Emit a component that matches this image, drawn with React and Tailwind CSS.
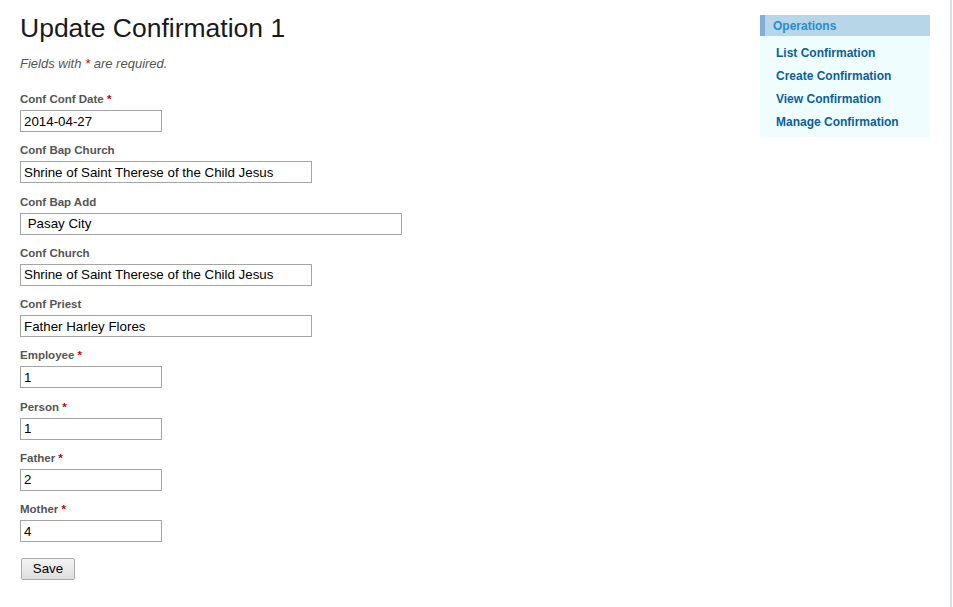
import React from "react";

const fields = [
  { label: "Conf Conf Date", value: "2014-04-27", required: true, w: "w-[142px]" },
  { label: "Conf Bap Church", value: "Shrine of Saint Therese of the Child Jesus", w: "w-[292px]" },
  { label: "Conf Bap Add", value: " Pasay City", w: "w-[382px]" },
  { label: "Conf Church", value: "Shrine of Saint Therese of the Child Jesus", w: "w-[292px]" },
  { label: "Conf Priest", value: "Father Harley Flores", w: "w-[292px]" },
  { label: "Employee", value: "1", required: true, w: "w-[142px]" },
  { label: "Person", value: "1", required: true, w: "w-[142px]" },
  { label: "Father", value: "2", required: true, w: "w-[142px]" },
  { label: "Mother", value: "4", required: true, w: "w-[142px]" },
];

const operations = ["List Confirmation", "Create Confirmation", "View Confirmation", "Manage Confirmation"];

function Field({ label, value, required, w }) {
  return (
    <div className="mb-[11.25px]">
      <label className="block text-[11.5px] leading-[15px] font-bold text-[#555]">
        {label}
        {required && <span className="text-[#cc0000]"> *</span>}
      </label>
      <input
        type="text"
        defaultValue={value}
        className={`${w} block mt-[3px] h-[22px] border border-[#a5a5a5] bg-white px-[3px] text-[13.33px] text-black outline-none`}
      />
    </div>
  );
}

export default function App() {
  return (
    <div className="w-[953px] min-h-screen bg-white" style={{ fontFamily: '"Liberation Sans", Arial, sans-serif' }}>
      <div className="flex w-[952px] min-h-screen border-r-2 border-[#d8e0e8]">
        <div className="flex-1 pl-[20px] pt-[12px]">
          <h1 className="text-[26.5px] leading-[32px] text-[#1a1a1a]">Update Confirmation 1</h1>
          <p className="mt-[11.5px] mb-[20.5px] text-[13px] leading-[16px] italic text-[#555]">
            Fields with <span className="text-[#cc0000]">*</span> are required.
          </p>

          <form onSubmit={(e) => e.preventDefault()}>
            {fields.map((f) => (
              <Field key={f.label} {...f} />
            ))}
            <button
              type="submit"
              className="block ml-px mt-[16px] h-[22px] w-[54px] rounded-[2px] border border-[#acacac] bg-gradient-to-b from-[#f4f4f4] to-[#dedede] text-[13.33px] text-black"
            >
              Save
            </button>
          </form>
        </div>

        <div className="mr-[20px] mt-[15px] w-[170px] self-start">
          <div className="h-[21px] border-l-[5px] border-[#80b0da] bg-[#b7d6e7] pl-[8px] text-[12px] font-bold leading-[22px] text-[#298dcd]">
            Operations
          </div>
          <ul className="bg-[#effdff] pl-[16px] pt-[5.5px] pb-[3.5px]">
            {operations.map((op) => (
              <li key={op} className="text-[12px] font-bold leading-[23px]">
                <a href="#" className="text-[#0a5f9e]">{op}</a>
              </li>
            ))}
          </ul>
        </div>
      </div>
    </div>
  );
}
